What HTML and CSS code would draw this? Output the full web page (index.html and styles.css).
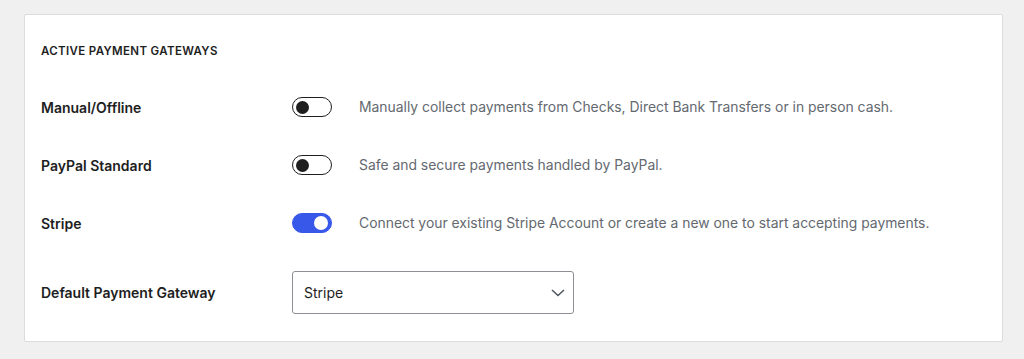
FILE: index.html
```html
<!DOCTYPE html>
<html lang="en">
<head>
<meta charset="utf-8">
<link rel="stylesheet" href="styles.css">
</head>
<body>
<div class="card">
  <h2 class="heading">Active Payment Gateways</h2>
  <div class="row">
    <div class="label">Manual/Offline</div>
    <span class="toggle"><span class="thumb"></span></span>
    <div class="desc">Manually collect payments from Checks, Direct Bank Transfers or in person cash.</div>
  </div>
  <div class="row">
    <div class="label">PayPal Standard</div>
    <span class="toggle"><span class="thumb"></span></span>
    <div class="desc">Safe and secure payments handled by PayPal.</div>
  </div>
  <div class="row">
    <div class="label">Stripe</div>
    <span class="toggle on"><span class="thumb"></span></span>
    <div class="desc">Connect your existing Stripe Account or create a new one to start accepting payments.</div>
  </div>
  <div class="row select-row">
    <div class="label">Default Payment Gateway</div>
    <div class="select">
      <span>Stripe</span>
      <svg class="chev" width="14" height="8" viewBox="0 0 14 8"><path d="M1 1l6 5.5L13 1" fill="none" stroke="#50575e" stroke-width="1.6"/></svg>
    </div>
  </div>
</div>
</body>
</html>
```
FILE: styles.css
```css
* { box-sizing: border-box; }
body {
  margin: 0;
  background: #f0f0f1;
  font-family: Inter, "Noto Sans", "Liberation Sans", sans-serif;
  color: #1e1e1e;
  padding: 14px 21px 17px 24px;
}
.card {
  background: #fff;
  border: 1px solid #dcdcde;
  border-radius: 2px;
  width: 979px;
  height: 328px;
  padding: 26px 16px 0 16px;
}
.heading {
  margin: 0 0 17px;
  font-size: 11.5px;
  line-height: 20px;
  font-weight: 600;
  text-transform: uppercase;
  letter-spacing: 0.35px;
}
.row {
  display: grid;
  grid-template-columns: 224px 40px 1fr;
  column-gap: 27px;
  align-items: center;
  height: 58px;
}
.label {
  font-size: 14px;
  font-weight: 600;
}
.desc {
  font-size: 13.9px;
  color: #646970;
}
.toggle {
  width: 40px;
  height: 20px;
  border: 1px solid #1e1e1e;
  border-radius: 10px;
  background: #fff;
  display: flex;
  align-items: center;
  padding: 0 3px;
}
.thumb {
  width: 13px;
  height: 13px;
  border-radius: 50%;
  background: #1e1e1e;
}
.toggle.on {
  background: #3858e9;
  border-color: #3858e9;
  justify-content: flex-end;
}
.toggle.on .thumb { background: #fff; width: 14px; height: 14px; }
.select-row {
  grid-template-columns: 224px 282px;
  height: 43px;
  margin-top: 19px;
}
.select {
  height: 43px;
  border: 1px solid #8c8f94;
  border-radius: 3px;
  display: flex;
  align-items: center;
  justify-content: space-between;
  padding: 0 8px 0 11px;
  font-size: 14px;
  color: #1e1e1e;
}
```
